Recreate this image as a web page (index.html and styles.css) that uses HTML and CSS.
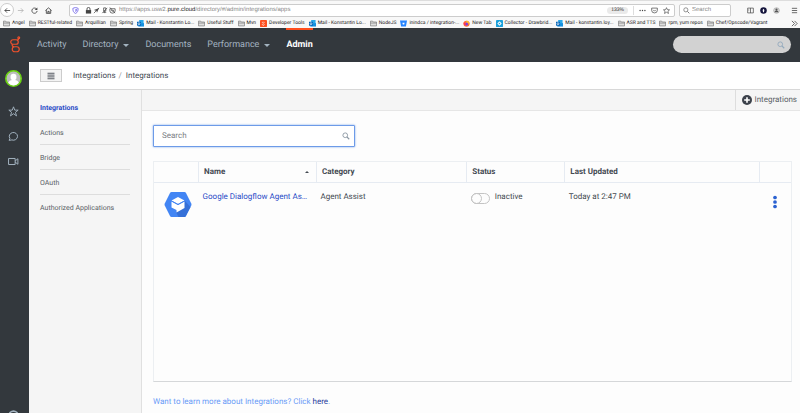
FILE: index.html
```html
<!DOCTYPE html>
<html lang="en">
<head>
<meta charset="utf-8">
<title>Integrations</title>
<link rel="stylesheet" href="styles.css">
</head>
<body>
<svg class="defs" aria-hidden="true">
  <symbol id="folder" viewBox="0 0 16 16"><path d="M1 13.500V2.500h5l1.500 2H15v9zM1 7h14" fill="#ddd" stroke="#666" stroke-width="1.300"/></symbol>
  <symbol id="outlook" viewBox="0 0 16 16"><path d="M5 0h10v8H5z" fill="#28a8ea"/><path d="M3 7h13v8H3z" fill="#1490df"/><path d="M0 4h9v9H0z" fill="#0364b8"/><circle cx="4.500" cy="8.500" r="2.200" fill="none" stroke="#fff" stroke-width="1.500"/></symbol>
  <symbol id="glass" viewBox="0 0 16 16"><circle cx="6.500" cy="6.500" r="4.700" fill="none" stroke="currentColor" stroke-width="1.800"/><path d="M10 10l4.500 4.500" stroke="currentColor" stroke-width="2.200"/></symbol>
</svg>
<header class="browser">
  <div class="toolbar">
    <button class="back" aria-label="Back"><svg viewBox="0 0 16 16"><path d="M14 8H2M7 3L2 8l5 5" fill="none" stroke="#333" stroke-width="1.800"/></svg></button>
    <button class="tool" aria-label="Forward"><svg viewBox="0 0 16 16"><path d="M2 8h12M9 3l5 5-5 5" fill="none" stroke="#aaa" stroke-width="1.600"/></svg></button>
    <button class="tool" aria-label="Reload"><svg viewBox="0 0 16 16"><path d="M13 5a6 6 0 1 0 1 4" fill="none" stroke="#444" stroke-width="1.900"/><path d="M14.500 1v6h-6z" fill="#444"/></svg></button>
    <button class="tool" aria-label="Home"><svg viewBox="0 0 16 16"><path d="M1 8l7-6 7 6M3 7v7.500h10V7M6.500 14v-4h3v4" fill="none" stroke="#333" stroke-width="1.800"/></svg></button>
    <div class="address">
      <svg viewBox="0 0 16 16"><path d="M8 1l6 2c0 6-1 9-6 12C3 12 2 9 2 3z" fill="#fff" stroke="#6a5de8" stroke-width="1.800"/><path d="M8 4v8c2-2 3-4 3-7z" fill="#6a5de8"/></svg>
      <svg class="lock" viewBox="0 0 16 16"><path d="M2 7h12v8H2z" fill="#444"/><path d="M4.500 7V4.500a3.500 3.500 0 0 1 7 0V7" fill="none" stroke="#444" stroke-width="2"/></svg>
      <svg viewBox="0 0 16 16"><path d="M14 2L9 13 8 9 2 7z" fill="#555"/><path d="M2 14L14 2" stroke="#444" stroke-width="1.600"/></svg>
      <svg viewBox="0 0 16 16"><path d="M6 2h5v7H6zM5 12h7M8.500 9v5M3 14L14 2" fill="none" stroke="#444" stroke-width="1.700"/></svg>
      <svg viewBox="0 0 16 16"><path d="M2 4h12v5a6 5 0 0 1-12 0zM2 1l12 13M5 7l3 3 3-3" fill="none" stroke="#444" stroke-width="1.700"/></svg>
      <span class="url">https://apps.usw2.<b>pure.cloud</b>/directory/#/admin/integrations/apps</span>
      <span class="zoom">133%</span>
      <i class="rule"></i>
      <svg viewBox="0 0 16 16"><g fill="#444"><circle cx="2.500" cy="8" r="1.600"/><circle cx="8" cy="8" r="1.600"/><circle cx="13.500" cy="8" r="1.600"/></g></svg>
      <svg viewBox="0 0 16 16"><path d="M1.500 2.500h13v5a6.500 6 0 0 1-13 0zM5 6.500l3 3 3-3" fill="none" stroke="#444" stroke-width="1.600"/></svg>
      <svg viewBox="0 0 16 16"><path d="M8 1.500l2 4.500 5 .5-3.700 3.200 1.200 5L8 12l-4.500 2.700 1.200-5L1 6.500 6 6z" fill="none" stroke="#444" stroke-width="1.500"/></svg>
    </div>
    <label class="websearch"><svg viewBox="0 0 16 16"><use href="#glass"/></svg><input type="text" placeholder="Search" aria-label="Web search"></label>
    <div class="extras">
      <svg viewBox="0 0 16 16"><path d="M1.500 2.500h13v11h-13zM8 2.500v11M4 5v1M4 8v1" fill="none" stroke="#444" stroke-width="1.600"/></svg>
      <svg viewBox="0 0 16 16"><circle cx="8" cy="8" r="7.500" fill="#14143c"/><path d="M8 4l2 3-1 5H7L6 7z" fill="#fff"/></svg>
      <svg viewBox="0 0 16 16"><circle cx="8" cy="8" r="6.500" fill="#ddd" stroke="#888"/><circle cx="8" cy="6" r="2.500" fill="#555"/><path d="M3.500 12a4.500 4 0 0 1 9 0z" fill="#555"/></svg>
      <svg class="menu" viewBox="0 0 16 16"><path d="M2 3h12M2 8h12M2 13h12" stroke="#444" stroke-width="1.800"/></svg>
    </div>
  </div>
  <nav class="bookmarks" aria-label="Bookmarks">
    <a href="#"><svg><use href="#folder"/></svg>Angel</a>
    <a href="#"><svg><use href="#folder"/></svg>RESTful-related</a>
    <a href="#"><svg><use href="#folder"/></svg>Arquillian</a>
    <a href="#"><svg><use href="#folder"/></svg>Spring</a>
    <a href="#"><svg><use href="#outlook"/></svg>Mail - Konstantin Lo...</a>
    <a href="#"><svg><use href="#folder"/></svg>Useful Stuff</a>
    <a href="#"><svg><use href="#folder"/></svg>Mvn</a>
    <a href="#"><svg viewBox="0 0 16 16"><rect width="16" height="16" rx="2" fill="#ff4f1f"/><path d="M6 4a2 2 0 1 0 3 0M6 9a2 2 0 1 0 3 0" fill="none" stroke="#fff" stroke-width="1.500"/></svg>Developer Tools</a>
    <a href="#"><svg><use href="#outlook"/></svg>Mail - Konstantin Lo...</a>
    <a href="#"><svg><use href="#folder"/></svg>NodeJS</a>
    <a href="#"><svg viewBox="0 0 16 16"><path d="M0 1h16l-2.500 14h-11z" fill="#2684ff"/><path d="M5.500 6h5l-1 4h-3z" fill="#fff"/></svg>inindca / integration-...</a>
    <a href="#"><svg viewBox="0 0 16 16"><circle cx="8" cy="8.500" r="7" fill="#ff7139"/><path d="M9 1q7 3 6 9-4-5-9-3z" fill="#ffbd2e"/><circle cx="8" cy="9" r="3.500" fill="#7542e5"/><path d="M1 6q4-1 6 3-3 1-1 4-5-1-5-7z" fill="#ff3654"/></svg>New Tab</a>
    <a href="#"><svg viewBox="0 0 16 16"><rect width="16" height="16" rx="2" fill="#1ba1dc"/><path d="M8 3l5 5-5 5-5-5z" fill="#fff"/><circle cx="8" cy="8" r="1.800" fill="#1ba1dc"/></svg>Collector - Drawbrid...</a>
    <a href="#"><svg><use href="#outlook"/></svg>Mail - konstantin.loy...</a>
    <a href="#"><svg><use href="#folder"/></svg>ASR and TTS</a>
    <a href="#"><svg><use href="#folder"/></svg>rpm, yum repos</a>
    <a href="#"><svg><use href="#folder"/></svg>Chef/Opscode/Vagrant</a>
    <button class="more" aria-label="More bookmarks"><svg viewBox="0 0 16 16"><path d="M2 2l6 6-6 6M8 2l6 6-6 6" fill="none" stroke="#444" stroke-width="1.800"/></svg></button>
  </nav>
</header>
<div class="app">
  <aside class="rail">
    <svg class="logo" viewBox="0 0 22 34"><g fill="none" stroke="#f0512d" stroke-width="2.400"><rect x="1.500" y="7.500" width="15" height="9" rx="4.500"/><circle cx="17.500" cy="3.500" r="1.800"/><path d="M14 8.500q3.500-1 3.500-3.500M5 16.500q-2 4 3 5"/><rect x="4.500" y="21.500" width="14" height="10" rx="5"/></g></svg>
    <svg class="avatar" viewBox="0 0 32 32"><circle cx="16" cy="16" r="14.500" fill="#bdbdbd" stroke="#6bd411" stroke-width="3"/><rect x="10.500" y="7" width="11" height="12" rx="5" fill="#fff"/><path d="M6 24q2-5 7-5h6q5 0 7 5-4 5-10 5T6 24z" fill="#fff"/></svg>
    <svg class="icon" viewBox="0 0 20 20"><path d="M10 1.500l2.300 6h6.200l-5 4 2 6.500L10 14l-5.500 4 2-6.500-5-4h6.200z" fill="none" stroke="#a3b3c0" stroke-width="1.700"/></svg>
    <svg class="icon" viewBox="0 0 20 20"><path d="M2 17l1.500-3.500A7.500 7 0 1 1 7 16.200z" fill="none" stroke="#a3b3c0" stroke-width="1.800"/></svg>
    <svg class="icon" viewBox="0 0 20 20"><path d="M1 4.500h12v11H1zM13 9l5-4v10l-5-4" fill="none" stroke="#a3b3c0" stroke-width="1.800"/></svg>
    <svg class="icon help" viewBox="0 0 20 20"><circle cx="10" cy="10" r="8" fill="none" stroke="#a3b3c0" stroke-width="3"/></svg>
  </aside>
  <div class="page">
    <nav class="topnav" aria-label="Main">
      <a href="#">Activity</a>
      <a href="#" class="drop">Directory</a>
      <a href="#">Documents</a>
      <a href="#" class="drop">Performance</a>
      <a href="#" class="active">Admin</a>
      <label class="global"><input type="text" aria-label="Search everything"><svg viewBox="0 0 16 16"><use href="#glass"/></svg></label>
    </nav>
    <div class="crumbs">
      <button class="toggle" aria-label="Toggle menu"><svg viewBox="0 0 16 16"><path d="M1 2.500h14M1 6.200h14M1 9.800h14M1 13.500h14" stroke="#444a52" stroke-width="1.800"/></svg></button>
      <a href="#">Integrations</a><span class="slash">/</span><span>Integrations</span>
    </div>
    <div class="body">
      <nav class="side" aria-label="Integrations">
        <a href="#" class="current">Integrations</a>
        <a href="#">Actions</a>
        <a href="#">Bridge</a>
        <a href="#">OAuth</a>
        <a href="#">Authorized Applications</a>
      </nav>
      <main>
        <div class="actions"><button class="add"><svg viewBox="0 0 16 16"><circle cx="8" cy="8" r="8" fill="#3c424b"/><path d="M8 3.500v9M3.500 8h9" stroke="#fff" stroke-width="2.600"/></svg>Integrations</button></div>
        <div class="content">
          <label class="filter"><input type="text" placeholder="Search" aria-label="Search integrations"><svg viewBox="0 0 16 16"><use href="#glass"/></svg></label>
          <div class="panel">
            <table>
              <colgroup><col class="c-icon"><col class="c-name"><col class="c-cat"><col class="c-status"><col class="c-date"><col class="c-menu"></colgroup>
              <thead><tr><th></th><th><span class="sort">Name</span></th><th>Category</th><th>Status</th><th>Last Updated</th><th></th></tr></thead>
              <tbody><tr>
                <td class="product"><svg viewBox="0 0 54 50"><path d="M14 0h26q2 0 3 2l10.500 21q1 2 0 4L43 48q-1 2-3 2H14q-2 0-3-2L.5 27q-1-2 0-4L11 2q1-2 3-2z" fill="#4285f4"/><path d="M40 17l12 13-10 19q-1 1-3 1H28l-5-10z" fill="#3570d8"/><path d="M27 10l13 7-13 7-13-7z" fill="#fff"/><path d="M14 19l13 7 13-7v13L24 41v-5l-10-5z" fill="#fff"/><path d="M14 18l13 7 13-7" fill="none" stroke="#4285f4" stroke-width="2"/></svg></td>
                <td class="name"><a href="#">Google Dialogflow Agent Assist</a></td>
                <td>Agent Assist</td>
                <td><label class="switch"><input type="checkbox">Inactive</label></td>
                <td>Today at 2:47 PM</td>
                <td class="kebab"><button aria-label="Row menu"><svg viewBox="0 0 8 26"><g fill="#2b62d1"><circle cx="4" cy="4" r="3.700"/><circle cx="4" cy="13" r="3.700"/><circle cx="4" cy="22" r="3.700"/></g></svg></button></td>
              </tr></tbody>
            </table>
          </div>
          <p class="learn">Want to learn more about Integrations? Click <a href="#">here</a>.</p>
        </div>
      </main>
    </div>
  </div>
</div>
</body>
</html>
```
FILE: styles.css
```css
* { box-sizing: border-box; }
body { margin: 0; height: 100vh; display: flex; flex-direction: column; overflow: hidden; font: 8px/12px Roboto, sans-serif; color: #444a52; background: #fdfdfd; text-rendering: geometricPrecision; }
a { color: inherit; text-decoration: none; }
button { border: 0; padding: 0; margin: 0; background: none; font: inherit; color: inherit; text-rendering: inherit; }
input { font: inherit; color: inherit; text-rendering: inherit; min-width: 0; border: 0; padding: 0; background: none; outline: 0; }
svg { display: block; flex: none; }
.defs { position: absolute; width: 0; height: 0; }

.browser { flex: none; background: #f8f8f8; font-family: "Liberation Sans", sans-serif; }
.toolbar { height: 18px; display: flex; align-items: center; gap: 7px; padding: 1px 2px 0 0; border-top: 1px solid #ddd; }
.toolbar svg { width: 7px; height: 7px; }
.back { width: 14px; height: 14px; border: 1px solid #ccc; border-radius: 50%; display: grid; place-items: center; background: #fff; margin-right: -4px; }
.address { flex: 1; height: 13px; display: flex; align-items: center; gap: 1px; border: 1px solid #ccc; border-radius: 2px; background: #fff; padding: 0 2px; margin-left: 10px; font-size: 6px; color: #888; }
.address svg:nth-last-child(-n+3) { margin: 0 2px; }
.address .lock { margin-left: 5px; }
.url { flex: 1; margin-left: 2px; white-space: nowrap; }
.url b { color: #222; font-weight: 400; }
.zoom { border-radius: 4px; background: #eaeaea; color: #333; padding: 0 4px; line-height: 7px; font-size: 5px; }
.rule { width: 1px; height: 9px; background: #ddd; margin: 0 2px 0 4px; }
.websearch { width: 52px; height: 13px; display: flex; align-items: center; gap: 2px; padding-left: 3px; border: 1px solid #ccc; border-radius: 2px; background: #fff; margin-left: -3px; font-size: 6px; color: #777; }
.websearch input { width: 38px; }
.websearch input::placeholder { color: #888; }
.extras { display: flex; gap: 6px; margin-left: 9px; }
.extras .menu { margin-left: 5px; }
.bookmarks { height: 10px; display: flex; align-items: center; gap: 4px; padding: 0 2px 0 3px; font: 5px/9px Roboto, sans-serif; color: #222; white-space: nowrap; }
.bookmarks a { display: flex; align-items: center; gap: 2px; }
.bookmarks svg { width: 7px; height: 7px; }
.more { margin-left: auto; }

.app { flex: 1; min-height: 0; display: flex; }
.rail { width: 29px; flex: none; background: #33383d; display: flex; flex-direction: column; align-items: center; padding-top: 8px; overflow: hidden; }
.logo { width: 11px; height: 17px; margin-left: 2px; }
.avatar { width: 17px; height: 17px; margin: 17px 2px 11px 0; }
.icon { width: 11px; height: 11px; margin: 8px 2px 6px 0; }
.help { margin: auto 2px -8px 0; }
.page { flex: 1; min-width: 0; display: flex; flex-direction: column; }
.topnav { flex: none; height: 34px; background: #33383d; display: flex; gap: 16px; padding: 0 9px 0 8px; color: #a3b3c0; font-size: 9px; line-height: 34px; }
.drop { display: flex; align-items: center; gap: 5px; }
.drop::after { content: ""; border: 3px solid transparent; border-top-color: currentColor; border-bottom: 0; }
.active { color: #fff; font-weight: 700; box-shadow: inset 0 2px #ff4f1f; }
.global { margin: 8px 0 0 auto; width: 118px; height: 17px; border-radius: 9px; background: #d2d2d2; display: flex; align-items: center; padding: 0 6px; color: #94aabd; }
.global input { flex: 1; }
.global svg, .filter svg { width: 8px; height: 8px; }
.filter svg { color: #8b97a3; }
.crumbs { flex: none; height: 28px; background: #fff; border-bottom: 1px solid #d8d8d8; display: flex; align-items: center; padding-left: 11px; }
.toggle { width: 22px; height: 13px; border: 1px solid #ccc; background: #f4f4f4; display: grid; place-items: center; margin-right: 11px; }
.toggle svg { width: 8px; height: 8px; }
.slash { color: #999; margin: 0 4px 0 3px; }
.body { flex: 1; min-height: 0; display: flex; }
.side { width: 113px; flex: none; background: #f5f5f5; border-right: 1px solid #e0e0e0; padding: 5px 11px; font-size: 7px; color: #5a5f66; }
.side a { display: block; height: 25px; line-height: 26px; border-bottom: 1px solid #ddd; }
.side a:last-child { border: 0; }
.side .current { color: #2a4cc7; font-weight: 700; }
main { flex: 1; min-width: 0; display: flex; flex-direction: column; }
.actions { height: 21px; flex: none; background: #f5f5f5; border-bottom: 1px solid #e6e6e6; display: flex; justify-content: flex-end; }
.add { border-left: 1px solid #ddd; padding: 0 3px 0 6px; display: flex; align-items: center; gap: 2px; color: #5a5f66; }
.add svg { width: 10px; height: 10px; }
.content { flex: 1; min-height: 0; display: flex; flex-direction: column; padding: 14px 8px 5px 11px; }
.filter { flex: none; width: 202px; height: 22px; border: 1px solid #6d9be8; border-radius: 1px; box-shadow: 0 0 2px #6d9be8; background: #fff; display: flex; align-items: center; padding: 0 4px 0 8px; }
.filter input { flex: 1; }
.filter input::placeholder { color: #7c8085; }
.panel { flex: 1; margin: 14px 0 14px; border: 1px solid #eceff2; border-bottom-color: #d5d7d9; }
table { width: 100%; table-layout: fixed; border-collapse: collapse; }
.c-icon { width: 7%; }
.c-name { width: 18.5%; }
.c-cat { width: 23.6%; }
.c-status { width: 15.4%; }
.c-menu { width: 5%; }
th { height: 20px; padding: 0 5px; text-align: left; font-weight: 700; border-bottom: 1px solid #e6ebf2; border-right: 1px solid #e6ebf2; }
th:last-child { border-right: 0; }
td { height: 42px; padding: 8px 4px 0; vertical-align: top; white-space: nowrap; }
.sort { display: flex; align-items: center; justify-content: space-between; }
.sort::after { content: ""; border: 2px solid transparent; border-bottom-color: #444a52; border-top: 0; margin-right: 2px; }
.product { padding: 9px 0 0 10px; }
.product svg { width: 28px; height: 25px; }
.name { overflow: hidden; text-overflow: ellipsis; color: #2a4cc7; padding-right: 9px; }
.switch { display: flex; align-items: center; gap: 5px; }
.switch input { flex: none; appearance: none; display: flex; margin: 2px 0 0; width: 19px; height: 11px; border: 1px solid #c4c4c4; border-radius: 6px; }
.switch input::before { content: ""; flex: none; box-sizing: border-box; width: 11px; height: 11px; margin: -1px; border: 1px solid #c4c4c4; border-radius: 50%; }
.kebab { padding: 12px 0 0; }
.kebab button { display: block; margin: 0 auto; }
.kebab svg { width: 4px; height: 14px; }
.learn { margin: 0; color: #699bf7; }
.learn a { color: #2a3f9d; }
```
